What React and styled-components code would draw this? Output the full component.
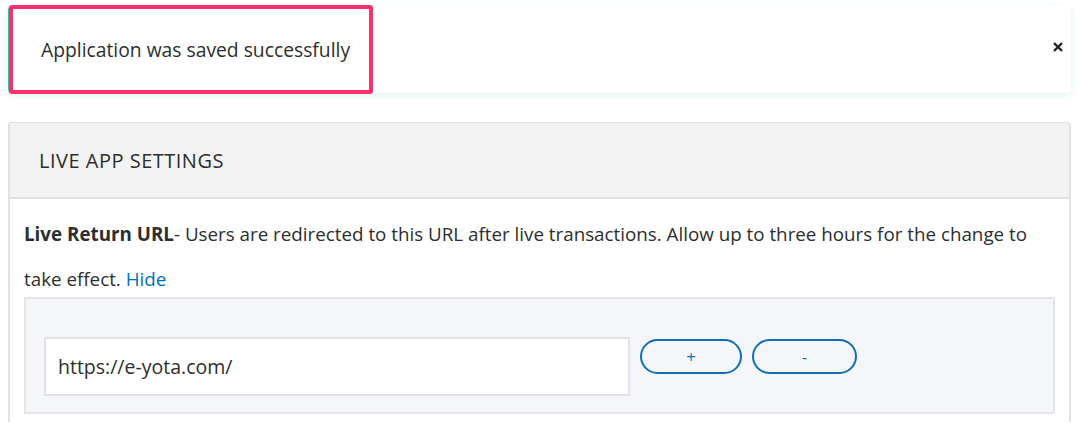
import React, { useState } from 'react';
import styled, { createGlobalStyle } from 'styled-components';

const GlobalStyle = createGlobalStyle`
  body {
    margin: 0;
    background: #fff;
    font-family: "Open Sans", Lato, "Liberation Sans", sans-serif;
    color: #2c2e2f;
  }
`;

const Page = styled.div`
  padding: 6px 7px 0 8px;
`;

const Alert = styled.div`
  position: relative;
  height: 87px;
  display: flex;
  align-items: center;
  justify-content: space-between;
  padding: 0 8px 0 31px;
  background: #fff;
  border-left: 2px solid #2ec295;
  border-radius: 4px;
  box-shadow: 0 2px 6px rgba(60, 200, 170, 0.18);
`;

const AlertText = styled.span`
  font-size: 19.3px;
  color: #2c2e2f;
`;

const Highlight = styled.div`
  position: absolute;
  left: -1px;
  top: -1px;
  width: 364px;
  height: 89px;
  border: 4px solid #ff2f6d;
  border-radius: 3px;
  box-sizing: border-box;
  pointer-events: none;
`;

const CloseButton = styled.button`
  border: 0;
  background: none;
  padding: 0;
  margin-top: -6px;
  cursor: pointer;
  display: flex;
`;

const Panel = styled.section`
  margin-top: 29px;
  border: 2px solid #e2e2e2;
  border-top-width: 1px;
  border-bottom: 0;
  border-radius: 4px 4px 0 0;
`;

const PanelHeader = styled.div`
  height: 74px;
  display: flex;
  align-items: center;
  padding-left: 29px;
  background: #f3f3f3;
  border-bottom: 2px solid #e0e0e0;
  font-size: 20px;
  letter-spacing: 0.5px;
  text-transform: uppercase;
  color: #2c2e2f;
`;

const PanelBody = styled.div`
  padding: 13px 14px 8px 14px;
`;

const Description = styled.p`
  margin: 0;
  font-size: 18.8px;
  line-height: 45px;
  color: #2c2e2f;
`;

const Label = styled.strong`
  font-weight: 700;
`;

const Link = styled.a`
  color: #0070ba;
  text-decoration: none;
  font-weight: 500;
`;

const UrlBox = styled.div`
  margin-top: -5px;
  padding: 38px 18px 16px;
  background: #f5f6fa;
  border: 2px solid #e6e6e6;
  display: flex;
  align-items: flex-start;
  gap: 10px;
`;

const UrlInput = styled.input`
  width: 586px;
  height: 59px;
  box-sizing: border-box;
  padding: 0 12px;
  border: 2px solid #e3e3e3;
  background: #fff;
  font-family: inherit;
  font-size: 19.5px;
  color: #2c2e2f;
  outline: none;
`;

const PillButton = styled.button`
  margin-top: 2px;
  width: ${({ $w }) => $w}px;
  height: 35px;
  border: 2px solid #0e6fb8;
  border-radius: 18px;
  background: transparent;
  color: #0e6fb8;
  font-family: inherit;
  font-size: 17px;
  line-height: 1;
  cursor: pointer;
`;

const App = () => {
  const [url, setUrl] = useState('https://e-yota.com/');

  return (
    <Page>
      <GlobalStyle />
      <Alert>
        <AlertText>Application was saved successfully</AlertText>
        <CloseButton aria-label="Close">
          <svg width="10" height="10" viewBox="0 0 10 10">
            <path d="M1 1L9 9M9 1L1 9" stroke="#222" strokeWidth="2.4" />
          </svg>
        </CloseButton>
        <Highlight />
      </Alert>

      <Panel>
        <PanelHeader>Live App Settings</PanelHeader>
        <PanelBody>
          <Description>
            <Label>Live Return URL</Label>- Users are redirected to this URL after live transactions. Allow up to three
            hours for the change to take effect. <Link href="#">Hide</Link>
          </Description>
          <UrlBox>
            <UrlInput value={url} onChange={(e) => setUrl(e.target.value)} />
            <PillButton $w={102}>+</PillButton>
            <PillButton $w={105}>-</PillButton>
          </UrlBox>
        </PanelBody>
      </Panel>
    </Page>
  );
};

export default App;
